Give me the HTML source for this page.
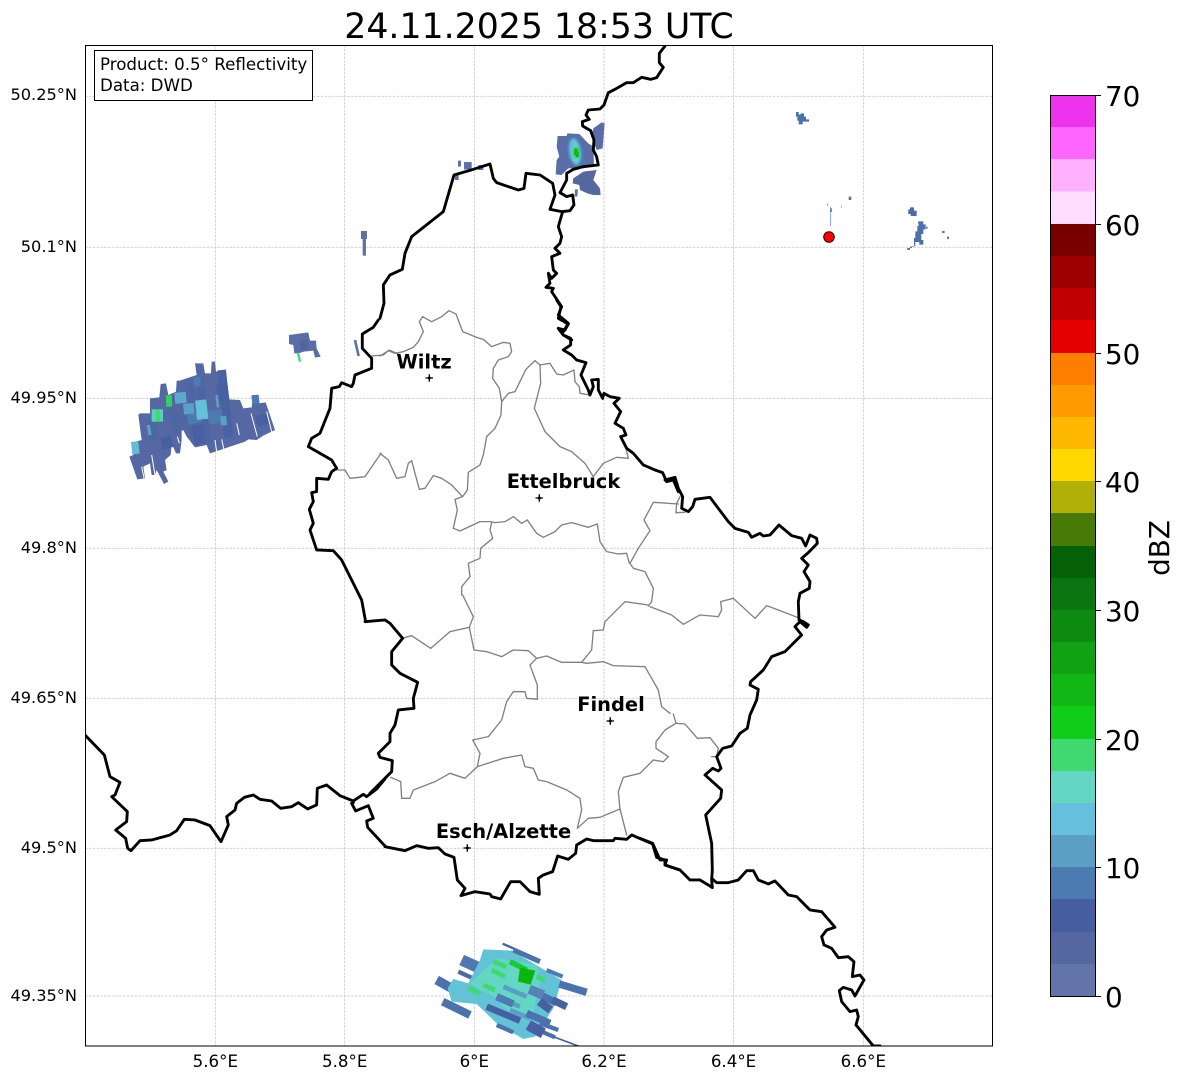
<!DOCTYPE html>
<html><head><meta charset="utf-8"><title>24.11.2025 18:53 UTC</title>
<style>
html,body{margin:0;padding:0;background:#fff}
svg{display:block}
text{font-family:"DejaVu Sans","Liberation Sans",sans-serif;fill:#000}
.g line{stroke:#c2c2c2;stroke-width:.75;stroke-dasharray:2.6 1.2}
.bk path{fill:none;stroke:#000;stroke-width:8.6;stroke-linejoin:round;stroke-linecap:round}
.gy path{fill:none;stroke:#808080;stroke-width:4;stroke-linejoin:round;stroke-linecap:round}
.t{font-size:16.67px}
.l{font-size:16.2px}
.c{font-size:19.44px;font-weight:bold}
.cb{font-size:27.8px}
</style></head><body>
<svg width="1184" height="1081" viewBox="0 0 1184 1081" xmlns="http://www.w3.org/2000/svg">
<defs><clipPath id="ax"><rect x="85.5" y="45.5" width="907" height="1000.5"/></clipPath>
<filter id="bl" x="-20%" y="-20%" width="140%" height="140%"><feGaussianBlur stdDeviation="3"/></filter></defs>
<rect width="1184" height="1081" fill="#fff"/>
<text x="539" y="38" font-size="34.7" text-anchor="middle">24.11.2025 18:53 UTC</text>
<g clip-path="url(#ax)">
<g class="g">
<line x1="215.3" y1="45" x2="215.3" y2="1046"/><line x1="344.7" y1="45" x2="344.7" y2="1046"/><line x1="474.3" y1="45" x2="474.3" y2="1046"/><line x1="604" y1="45" x2="604" y2="1046"/><line x1="733.5" y1="45" x2="733.5" y2="1046"/><line x1="863.3" y1="45" x2="863.3" y2="1046"/>
<line x1="85" y1="96.3" x2="993" y2="96.3"/><line x1="85" y1="247.3" x2="993" y2="247.3"/><line x1="85" y1="398.3" x2="993" y2="398.3"/><line x1="85" y1="548.3" x2="993" y2="548.3"/><line x1="85" y1="698.3" x2="993" y2="698.3"/><line x1="85" y1="848.3" x2="993" y2="848.3"/><line x1="85" y1="996" x2="993" y2="996"/>
</g>
<!-- radar west cell -->
<g class="r" fill="none" transform="translate(100 320) scale(.3333)">
<path fill="#5568a4" d="M120 280L150 280L150 235L178 232L182 192L198 190L205 225L228 215L230 182L240 182L245 180L290 165L285 130L310 130L315 160L333 160L335 125L345 125L348 155L375 150L385 238L420 240L430 265L455 262L460 225L472 225L478 250L497 247L525 330L490 347L470 360L445 358L435 365L360 390L330 400L320 375L285 382L260 350L245 320L245 360L240 400L228 400L215 370L212 405L195 420L200 450L190 455L205 485L192 492L170 450L165 465L155 465L150 430L130 440L135 475L112 478L88 410L100 405L95 368L125 360L115 285Z"/>
<path stroke="#fff" stroke-width="3" d="M410 310L418 345M453 280L472 350M500 275L515 335M365 358L372 390M345 360L350 395M155 405L165 465M125 440L132 475M232 350L238 370"/>
<path stroke="#4e66a2" stroke-width="26" d="M155 300L165 360M222 280L232 340M208 230L218 300"/>
<path stroke="#4e66a2" stroke-width="34" d="M250 220L262 330"/>
<path stroke="#4e66a2" stroke-width="30" d="M268 178L285 352"/>
<path stroke="#4b66a6" stroke-width="24" d="M300 170L320 372"/>
<path stroke="#4a62a4" stroke-width="26" d="M365 150L386 350"/>
<path stroke="#4660a2" stroke-width="34" d="M365 190L372 245M292 315L300 372M482 285L490 315M195 350L205 385"/>
<path stroke="#4b7bb1" stroke-width="22" d="M290 170L292 200M465 225L468 252"/>
<path stroke="#4b7bb1" stroke-width="42" d="M280 280L285 310M345 270L348 310"/>
<path stroke="#5b9fc5" stroke-width="32" d="M265 250L268 282"/>
<path stroke="#5ea8cc" stroke-width="34" d="M240 217L243 250"/>
<path stroke="#66bfdb" stroke-width="34" d="M302 240L308 298"/>
<path stroke="#5b9fc5" stroke-width="8" d="M350 225L354 262"/>
<path stroke="#5b9fc5" stroke-width="18" d="M370 288L372 316"/>
<path stroke="#5b9fc5" stroke-width="10" d="M145 315L150 345"/>
<path stroke="#63bcd3" stroke-width="22" d="M104 365L108 402"/>
<path stroke="#5dcfc0" stroke-width="34" d="M172 268L172 305"/>
<path stroke="#3fd96f" stroke-width="13" d="M172 270L175 305"/>
<path stroke="#2fd460" stroke-width="18" d="M206 226L208 260"/>
<path fill="#5a6da6" d="M567 45L625 37L630 62L648 62L650 85L662 110L645 113L640 92L612 95L595 100L583 100L580 75L567 72Z"/>
<path stroke="#4e66a2" stroke-width="22" d="M610 60L614 90"/>
<path stroke="#3fd96f" stroke-width="7" d="M594 98L600 125"/>
<path stroke="#5f72a7" stroke-width="8" d="M765 60L776 108"/>
</g>
<g fill="none" transform="translate(85 40) scale(.3333)">
<path stroke="#5f72a7" stroke-width="18" d="M837 573L837 597"/>
<path stroke="#5f72a7" stroke-width="10" d="M838 597L838 647"/>
</g>
<!-- radar north cell -->
<g transform="translate(380 40) scale(.3333)">
<path fill="#5a6da6" d="M533 288L560 288L562 280L598 282L625 310L640 320L642 375L610 385L565 385L545 405L527 403L530 360L538 350L530 320Z"/>
<path fill="#5a6da6" d="M640 265L665 247L674 250L668 325L650 330L635 290Z"/>
<path fill="#54689f" d="M580 415L610 395L650 390L640 420L660 445L662 465L640 465L622 460L600 450L598 435L578 430Z"/>
<path fill="#5f72a7" d="M585 448L594 448L592 470L584 470Z"/>
<path fill="#5f72a7" d="M234 362H243V380H234ZM252 366H275V388H252ZM295 375H310V390H295ZM225 405H236V420H225Z"/>
<path fill="#4b7bb1" d="M560 300L590 290L610 320L615 370L590 380L565 360Z"/>
<g filter="url(#bl)">
<ellipse cx="585" cy="335" rx="17" ry="40" fill="#66bfdb" transform="rotate(-8 585 335)"/>
<ellipse cx="588" cy="340" rx="12" ry="28" fill="#63d6c4"/>
<ellipse cx="588" cy="338" rx="9" ry="18" fill="#28cf50"/>
</g>
<path fill="#11b815" d="M583 325H593V335H597V352H588V345H582Z"/>
</g>
<!-- radar south cell -->
<g class="r" fill="none" transform="translate(380 780) scale(.3333)">
<path stroke="#4b72ad" stroke-width="28" d="M170 600L215 625"/>
<path stroke="#4b72ad" stroke-width="24" d="M188 665L270 705"/>
<path stroke="#4f78b0" stroke-width="34" d="M245 540L300 565"/>
<path stroke="#54689f" stroke-width="13" d="M235 575L290 600"/>
<path fill="#63c3d6" d="M310 508L395 512L545 600L520 685L465 770L430 777L350 730L290 672L215 665L203 625L220 597L265 610L300 540Z"/>
<path fill="#63d6c4" d="M350 535L470 555L480 610L460 700L400 705L340 650L300 630L270 610Z"/>
<path stroke="#5b9fc5" stroke-width="14" d="M370 620L440 650M350 650L420 680M390 690L450 715"/>
<path stroke="#3fd96f" stroke-width="14" d="M340 545L380 560M335 570L375 590M265 625L300 640M310 615L345 630M470 590L495 600"/>
<path stroke="#14cc2a" stroke-width="16" d="M390 545L440 570"/>
<path fill="#0bb50f" d="M420 563L466 572L452 614L414 605Z"/>
<path stroke="#4660a2" stroke-width="7" d="M368 491L478 540"/>
<path stroke="#4b72ad" stroke-width="15" d="M400 510L480 545"/>
<path stroke="#4b7bb1" stroke-width="12" d="M500 570L548 590"/>
<path stroke="#4b72ad" stroke-width="22" d="M538 612L620 637M470 640L530 668M440 700L510 730"/>
<path stroke="#4660a2" stroke-width="22" d="M518 660L560 680"/>
<path stroke="#4b72ad" stroke-width="13" d="M350 735L400 757M480 730L535 750M490 757L525 772"/>
<path stroke="#4660a2" stroke-width="20" d="M320 680L420 722"/>
<path stroke="#4660a2" stroke-width="32" d="M445 735L490 760"/>
<path stroke="#4660a2" stroke-width="24" d="M478 665L512 690"/>
<path stroke="#5a80b5" stroke-width="28" d="M448 628L490 645"/>
<path stroke="#4b7bb1" stroke-width="22" d="M350 650L400 672"/>
<path stroke="#4660a2" stroke-width="5" d="M520 770L605 802"/>
</g>
<!-- eastern specks -->
<g transform="translate(760 90) scale(.3333)">
<path fill="#4b70ab" d="M108 66H116V74H122V70H132V80H138V88H147V95H128V103H116V92H112V80H108Z"/>
<path fill="#4f6ca8" d="M450 352H462V362H470V378H452V372H445V358H450Z"/>
<path fill="#4b70ab" d="M474 394H490V403H497V418H490V432H484V450H490V464H478V456H466V468H456V474H442V480H450V470H462V444H466V424H472V408H476Z"/>
<path fill="#5f72a7" d="M266 320H274V330H266ZM546 423H554V429H546ZM561 440H567V447H561ZM498 410H503V416H498Z"/>
<path stroke="#6f93b8" stroke-width="2.5" fill="none" d="M212 350V408M202 340V348M244 347V353"/>
<path fill="#4f9bb0" d="M210 355H216V366H210Z"/>
</g>
<!-- admin boundaries -->
<g class="gy" transform="translate(100 320) scale(.3333)">
<path d="M815 108L850 105L868 90L900 105"/>
<path d="M710 450L735 450L750 475L795 470L843 400"/>
</g>
<g class="gy" transform="translate(380 300) scale(.3333)">
<path d="M0 168L25 152L45 160L70 155L100 142L115 125L130 95L118 65L128 50L155 65L185 50L207 32L228 42L248 95L290 112L310 118L335 140L370 127L390 130L395 155L385 170L355 180L340 205L338 235L358 265L365 305L363 345L345 385L320 410L310 465L300 495L265 517L262 570L248 590L225 598L232 630L220 685L240 693L300 665L330 665L345 668L375 665L400 650L425 670L442 660L470 700L490 712L525 695L545 675L575 668L625 682L652 672L660 725L680 755L715 762L740 760L748 790"/>
<path d="M0 460L25 480L50 535L75 530L85 490L95 482L105 520L118 568L135 565L160 527L185 535L215 555L248 590"/>
<path d="M365 305L385 280L405 275L438 208L465 182L480 195L510 190L530 222L550 225L582 210L585 245L598 260L600 280L630 285"/>
<path d="M480 195L482 250L463 325L495 395L540 440L575 455L615 490L640 530L670 490L710 472L745 475L738 445"/>
<path d="M335 668L330 690L338 715L302 745L300 775L265 790L270 830L245 860L245 885"/>
</g>
<g class="gy" transform="translate(600 400) scale(.3333)">
<path d="M240 290L230 310L228 338L255 337"/>
<path d="M235 312L160 307L132 360L150 392L115 445L90 490"/>
<path d="M90 490L100 505L135 515L160 565L155 605L145 618"/>
<path d="M150 620L215 645L250 673L300 645L355 650L365 630L362 605L400 595L465 655L500 617L540 632L600 655"/>
</g>
<g class="gy" transform="translate(370 570) scale(.3333)">
<path d="M278 75L310 140L298 172L240 185L182 235L125 197L98 205"/>
<path d="M298 172L312 240L350 245L395 260L430 240L475 242L500 265L480 285L502 345L502 388L470 385L465 365L430 365L410 395L395 450L355 500L308 510L330 550L322 590L285 625L240 610L195 635L130 660L120 685L95 685L92 635L62 622"/>
<path d="M322 590L400 565L455 555L465 590L490 595L505 630L530 635L590 660L630 685L635 720L622 775L655 745L690 742L750 717L770 795"/>
<path d="M750 717L745 665L760 622L810 610"/>
<path d="M500 265L530 258L575 277L635 277L665 240L670 182L700 180L705 155L765 95L835 105"/>
<path d="M635 277L650 280L700 275L730 287L825 290L865 360L875 410L900 430"/>
</g>
<g class="gy" transform="translate(640 700) scale(.3333)">
<path d="M100 42L108 70L75 90L48 125L48 145L85 170L70 185L40 180L0 220"/>
<path d="M108 70L135 72L172 115L210 113L235 145L230 170L215 170"/>
</g>
<!-- black borders -->
<g class="bk" transform="translate(380 40) scale(.3333)">
<path d="M855 18L838 40L838 68L850 82L830 113L812 118L785 112L760 128L740 128L705 148L685 158L672 195L660 207L625 210L618 225L628 238L607 245L608 258L632 272L642 300L640 330L650 350L655 375L610 380L580 388L560 400L560 420L540 458L560 470L578 465L582 495L570 512L545 515L510 508L525 465L518 430L480 405L438 400L432 445L415 450L350 428L340 415L330 372L280 388L222 405L190 515L95 590L75 640L67 688L30 705L10 735L12 790L0 835"/>
<path d="M548 515L535 560L545 590L540 610L525 625L540 640L515 650L520 690L530 700L515 715L505 700L510 730L498 742L520 745L515 755L545 800L535 825L565 850L550 875L535 865L550 885L575 900"/>
</g>
<g class="bk" transform="translate(380 300) scale(.3333)">
<path d="M530 0L543 20L535 55L565 72L555 90L535 85L550 105L572 115L572 135L550 150L575 165L590 180L618 188L603 225L625 270L630 285L640 260L635 240L655 238L655 270L668 295L672 280L690 290L718 295L702 310L722 335L705 370L730 385L738 405L722 410L740 445L760 460L790 495L825 510L848 518L860 545L880 540L895 575"/>
</g>
<g class="bk" transform="translate(600 400) scale(.3333)">
<path d="M195 240L225 232L235 265L248 290L245 325L265 335L278 320L285 298L330 292L385 365L405 385L445 397L455 412L480 400L490 408L510 405L537 375L575 407L605 415L617 438L630 405L650 415L652 430L625 458L605 475L625 495L612 515L630 545L628 565L600 580L595 605L597 660L610 665L625 675L620 682L600 665L585 680L605 705L570 740L555 755L515 770L490 810L452 845L450 855L475 868L470 900"/>
</g>
<g class="bk" transform="translate(640 700) scale(.3333)">
<path d="M350 0L330 45L322 85L300 100L275 138L248 145L230 170L243 205L235 213L218 205L195 225L245 270L242 295L197 345L215 430L217 510L215 540L217 563L205 555L180 540L150 540L120 510L75 495L80 480L60 480L38 430L0 415"/>
<path d="M215 535L230 548L265 548L295 540L320 512L340 512L355 540L385 552L405 543L445 585L470 590L510 630L545 635L575 670L585 682L560 690L545 710L552 735L575 745L595 773L625 770L642 785L637 830L660 825L672 840L645 888L635 870L610 862L598 872L605 905L630 935L650 930L655 950L648 975L700 1038L720 1038"/>
</g>
<g class="bk" transform="translate(380 780) scale(.3333)">
<path d="M15 200L30 203L75 212L110 197L145 205L175 203L195 222L222 232L232 300L255 325L243 347L285 335L330 342L335 350L362 357L392 305L420 305L450 335L478 343L475 295L490 285L518 275L533 228L565 238L587 220L590 195L620 177L640 182L700 182L705 175L740 178L755 165L818 192L830 232L855 240L855 255L900 270"/>
</g>
<g class="bk" transform="translate(85 640) scale(.3333)">
<path d="M0 285L58 345L75 410L105 427L90 465L80 470L127 515L125 545L92 570L122 595L128 625L138 632L165 602L200 600L255 585L275 572L298 538L330 540L375 557L408 605L430 555L425 530L450 510L455 490L478 472L505 465L525 478L560 483L587 505L620 500L640 488L668 507L695 495L697 445L725 435L765 467L805 483L835 463L845 470L875 447L900 417"/>
<path d="M805 488L800 490L812 513L850 497L865 535L845 543L848 562L900 618"/>
</g>
<g class="bk" transform="translate(370 570) scale(.3333)">
<path d="M-15 155L45 150L60 160L98 205L65 245L65 285L90 310L143 337L130 385L132 415L85 420L75 465L60 490L60 515L25 550L30 562L67 572L65 605L0 670"/>
</g>
<g class="bk" transform="translate(100 320) scale(.3333)">
<path d="M835 0L820 22L787 42L787 85L815 115L815 145L765 165L760 190L755 200L725 188L718 200L695 205L690 265L660 340L635 355L625 380L695 420L710 445L695 455L685 478L650 475L650 515L635 518L640 545L628 568L640 610L630 630L650 690L700 692L725 720L785 840L797 905"/>
</g>
<circle cx="829" cy="237" r="5.3" fill="#f00" stroke="#300" stroke-width="1"/>
<g stroke="#000" stroke-width="1.3" fill="none">
<path d="M425.5 378H433M429.3 374.3V381.7"/>
<path d="M535.5 498H543M539.3 494.3V501.7"/>
<path d="M606.5 721H614M610.3 717.3V724.7"/>
<path d="M463.5 848H471M467.3 844.3V851.7"/>
</g>
<g fill="#000"><circle cx="429.3" cy="378" r="1.5"/><circle cx="539.3" cy="498" r="1.5"/><circle cx="610.3" cy="721" r="1.5"/><circle cx="467.3" cy="848" r="1.5"/></g>
<text class="c" x="424" y="368.5" text-anchor="middle">Wiltz</text>
<text class="c" x="563.5" y="488" text-anchor="middle">Ettelbruck</text>
<text class="c" x="611" y="711" text-anchor="middle">Findel</text>
<text class="c" x="503.5" y="838" text-anchor="middle">Esch/Alzette</text>
</g>
<rect x="85.5" y="45.5" width="907" height="1000.5" fill="none" stroke="#000" stroke-width="1"/>
<rect x="94.5" y="50.5" width="218" height="50" fill="#fff" stroke="#000" stroke-width="1"/>
<text class="t" x="100" y="70">Product: 0.5° Reflectivity</text>
<text class="t" x="100" y="91">Data: DWD</text>
<g class="l" text-anchor="end">
<text x="77" y="100">50.25°N</text><text x="77" y="252">50.1°N</text><text x="77" y="403">49.95°N</text><text x="77" y="553">49.8°N</text><text x="77" y="703">49.65°N</text><text x="77" y="853">49.5°N</text><text x="77" y="1001">49.35°N</text>
</g>
<g class="t" text-anchor="middle">
<text x="215.3" y="1067">5.6°E</text><text x="344.7" y="1067">5.8°E</text><text x="474.3" y="1067">6°E</text><text x="604" y="1067">6.2°E</text><text x="733.5" y="1067">6.4°E</text><text x="863.3" y="1067">6.6°E</text>
</g>
<!-- colorbar -->
<g shape-rendering="crispEdges">
<rect x="1051" y="95.5" width="44.5" height="32.5" fill="#ee33ee"/>
<rect x="1051" y="127" width="44.5" height="33" fill="#ff66ff"/>
<rect x="1051" y="159" width="44.5" height="33" fill="#ffb0ff"/>
<rect x="1051" y="191.5" width="44.5" height="33" fill="#ffddff"/>
<rect x="1051" y="224" width="44.5" height="32.5" fill="#7a0000"/>
<rect x="1051" y="256" width="44.5" height="32.5" fill="#9e0000"/>
<rect x="1051" y="288" width="44.5" height="32.5" fill="#c00000"/>
<rect x="1051" y="320" width="44.5" height="33" fill="#e40000"/>
<rect x="1051" y="353" width="44.5" height="32" fill="#ff7e00"/>
<rect x="1051" y="385" width="44.5" height="32" fill="#ff9a00"/>
<rect x="1051" y="417" width="44.5" height="32" fill="#ffb800"/>
<rect x="1051" y="449" width="44.5" height="32" fill="#ffd800"/>
<rect x="1051" y="481" width="44.5" height="32" fill="#b0b008"/>
<rect x="1051" y="513" width="44.5" height="33" fill="#487a08"/>
<rect x="1051" y="546" width="44.5" height="32" fill="#056108"/>
<rect x="1051" y="578" width="44.5" height="32" fill="#0b7610"/>
<rect x="1051" y="610" width="44.5" height="32" fill="#0d8b11"/>
<rect x="1051" y="642" width="44.5" height="32" fill="#10a212"/>
<rect x="1051" y="674" width="44.5" height="32" fill="#11b815"/>
<rect x="1051" y="706" width="44.5" height="33" fill="#10cc1b"/>
<rect x="1051" y="739" width="44.5" height="32" fill="#3fd96f"/>
<rect x="1051" y="771" width="44.5" height="32" fill="#63d6c4"/>
<rect x="1051" y="803" width="44.5" height="32" fill="#66bfdb"/>
<rect x="1051" y="835" width="44.5" height="32" fill="#5b9fc5"/>
<rect x="1051" y="867" width="44.5" height="32" fill="#4b7bb1"/>
<rect x="1051" y="899" width="44.5" height="33" fill="#445ea0"/>
<rect x="1051" y="932" width="44.5" height="32" fill="#54689f"/>
<rect x="1051" y="964" width="44.5" height="32.5" fill="#6374a8"/>
</g>
<rect x="1050.5" y="95.5" width="45" height="901" fill="none" stroke="#000" stroke-width="1"/>
<g stroke="#000" stroke-width="1">
<path d="M1096 95.5h5M1096 224.5h5M1096 353.5h5M1096 481.5h5M1096 610.5h5M1096 739.5h5M1096 867.5h5M1096 996.5h5"/>
</g>
<g class="cb">
<text x="1105" y="106">70</text><text x="1105" y="235">60</text><text x="1105" y="364">50</text><text x="1105" y="492">40</text><text x="1105" y="621">30</text><text x="1105" y="750">20</text><text x="1105" y="878">10</text><text x="1105" y="1007">0</text>
</g>
<text transform="translate(1169 548) rotate(-90)" font-size="27.8" text-anchor="middle">dBZ</text>
</svg>
</body></html>
